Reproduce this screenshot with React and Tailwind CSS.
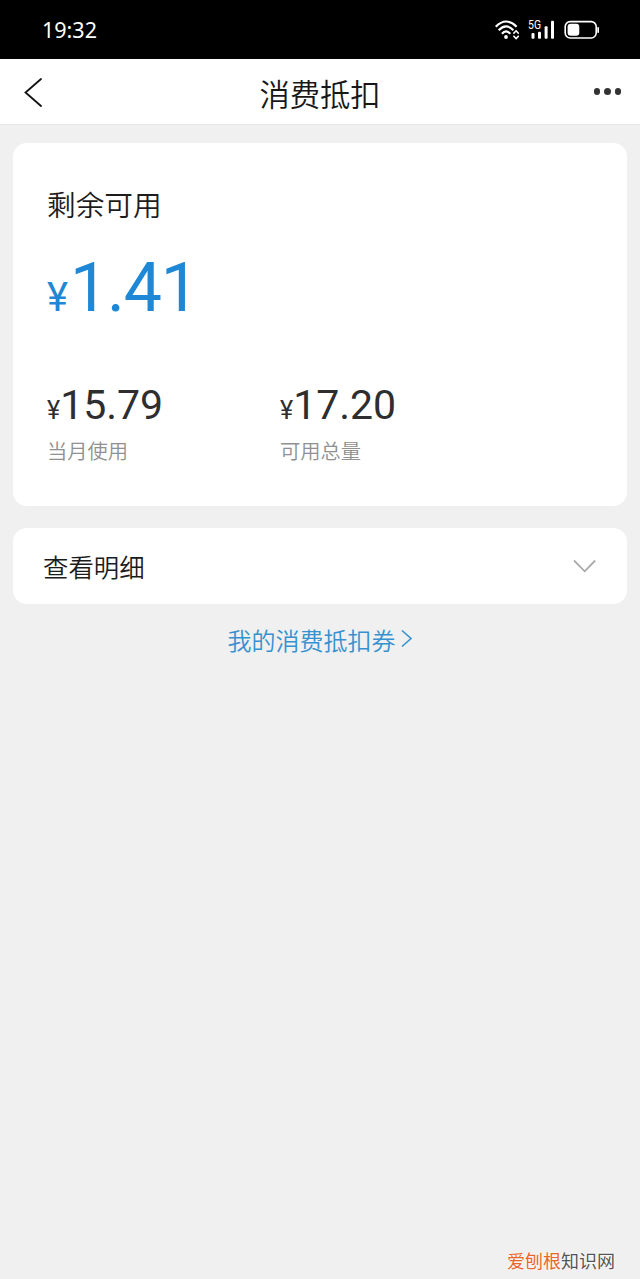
import React from 'react';

function StatusBar() {
  return (
    <div className="flex h-[59px] items-center justify-between bg-black pl-[42px] pr-[40px] text-white">
      <span className="font-['Noto_Sans',sans-serif] text-[21.5px] leading-[30px]">19:32</span>
      <div className="flex items-center">
        <svg className="h-5 w-6" viewBox="0 0 24 20" fill="none" stroke="white" strokeWidth="2.2">
          <path d="M0.7 6.8Q11-3.8 21.6 6.8" />
          <path d="M3.7 10.2Q11 2.4 18.4 10.2" />
          <path d="M6.9 13.7Q11 9 15.3 13.7" />
          <circle cx="11" cy="17" r="1.9" fill="white" stroke="none" />
          <path d="M18.4 13.6l2.7-2.8 2.7 2.8M18.4 15.8l2.7 2.8 2.7-2.8" strokeWidth="1.6" />
        </svg>
        <svg className="ml-[9px] h-[30px] w-[27px]" viewBox="0 -5 27 30" fill="white">
          <text x="0" y="9.3" fontFamily="Roboto, sans-serif" fontSize="12" fontWeight="400" textLength="13" lengthAdjust="spacingAndGlyphs">5G</text>
          <rect x="3.5" y="13" width="3" height="5.7" rx="1" />
          <rect x="10" y="11.7" width="3" height="7" rx="1" />
          <rect x="16.6" y="6.3" width="3" height="12.4" rx="1" />
          <rect x="23" y="0.7" width="3" height="18" rx="1" />
        </svg>
        <svg className="ml-[9px] h-5 w-[36px]" viewBox="0 0 36 20">
          <rect x="1.2" y="1.6" width="31" height="16.4" rx="5" fill="none" stroke="white" strokeWidth="1.6" />
          <rect x="3.6" y="3.8" width="11.7" height="12" rx="3" fill="white" />
          <rect x="33.3" y="7" width="1.7" height="6" rx="0.8" fill="white" />
        </svg>
      </div>
    </div>
  );
}

function Header() {
  return (
    <header className="flex h-[66px] items-center justify-between border-b border-[#e6e6e6] bg-white pl-[24px] pr-[19px]">
      <svg className="h-[30px] w-[53px]" viewBox="0 0 53 30" fill="none" stroke="#111" strokeWidth="1.8" strokeLinecap="round">
        <path d="M17 2L1.5 15.5L17 29" />
      </svg>
      <h1 className="mr-[5px] pt-[2px] text-[30.3px] font-[350] leading-[44px] text-[#181818]">消费抵扣</h1>
      <div className="flex w-[53px] justify-end gap-[4px]">
        <i className="size-[6.5px] rounded-full bg-[#333]" />
        <i className="size-[6.5px] rounded-full bg-[#333]" />
        <i className="size-[6.5px] rounded-full bg-[#333]" />
      </div>
    </header>
  );
}

function Stat({ value, label }) {
  return (
    <div className="w-[233px]">
      <div className="flex items-baseline font-[Roboto,sans-serif] text-[#2e2e30]">
        <span className="text-[25px] leading-none">¥</span>
        <span className="text-[41px] leading-[48px]">{value}</span>
      </div>
      <div className="mt-[6px] text-[20.3px] font-[350] leading-[30px] text-[#909090]">{label}</div>
    </div>
  );
}

export default function App() {
  return (
    <div className="flex h-[1279px] w-[640px] flex-col bg-[#f0f0f0] font-['Noto_Sans_CJK_SC',sans-serif]">
      <StatusBar />
      <Header />
      <main className="flex flex-1 flex-col px-[13px] pt-[18px]">
        <section className="h-[363px] rounded-[14px] bg-white pl-[34px] pt-[40px]">
          <h2 className="text-[28.7px] font-[350] leading-[42px] text-[#1c1c1c]">剩余可用</h2>
          <div className="mt-[23px] flex items-baseline font-[Roboto,sans-serif] text-[#1e88d6]">
            <span className="text-[40px] leading-none">¥</span>
            <span className="ml-[2px] text-[68px] leading-[80px] tracking-[-1.2px]">1.41</span>
          </div>
          <div className="mt-[53px] flex">
            <Stat value="15.79" label="当月使用" />
            <Stat value="17.20" label="可用总量" />
          </div>
        </section>
        <button className="mt-[22px] flex h-[76px] items-center justify-between rounded-[14px] bg-white pl-[30px] pr-[30px]">
          <span className="text-[25.4px] font-[350] leading-[38px] text-[#1c1c1c]">查看明细</span>
          <svg className="h-[14px] w-[25px]" viewBox="0 0 25 14" fill="none" stroke="#aaa" strokeWidth="1.8">
            <path d="M2 1.5L12.7 12.3L23.2 1.5" />
          </svg>
        </button>
        <a className="mt-[18px] flex h-[36px] items-center self-center text-[24px] font-[350] leading-[36px] text-[#3692cf]">
          <span>我的消费抵扣券</span>
          <svg className="mb-[3px] ml-[5px] h-[20px] w-[12px]" viewBox="0 0 12 20" fill="none" stroke="currentColor" strokeWidth="1.6">
            <path d="M1 1.5L10 9.5L1 17.5" />
          </svg>
        </a>
        <footer className="mt-auto flex justify-end pb-[5px] pr-[12px] text-[18px] leading-[27px] text-[#555] [text-shadow:0_0_2px_white,0_0_2px_white]">
          <span className="text-[#e8662a]">爱刨根</span>
          <span>知识网</span>
        </footer>
      </main>
    </div>
  );
}
